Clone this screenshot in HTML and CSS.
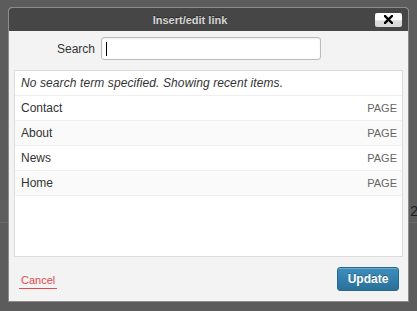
FILE: index.html
```html
<!DOCTYPE html>
<html>
<head>
<meta charset="utf-8">
<link rel="stylesheet" href="styles.css">
</head>
<body>
<div class="page-row"><span class="page-num">2</span></div>

<div class="dialog">
  <div class="titlebar">
    <div class="title">Insert/edit link</div>
    <button class="close" aria-label="Close">
      <svg width="9" height="9" viewBox="0 0 9 9"><path d="M1 1 L8 8 M8 1 L1 8" stroke="#000" stroke-width="2.4" stroke-linecap="square"/></svg>
    </button>
  </div>
  <div class="search-row">
    <label class="search-label">Search</label>
    <div class="search-input"><span class="caret"></span></div>
  </div>
  <div class="results">
    <div class="row notice">No search term specified. Showing recent items.</div>
    <div class="row"><span class="item">Contact</span><span class="type">PAGE</span></div>
    <div class="row alt"><span class="item">About</span><span class="type">PAGE</span></div>
    <div class="row"><span class="item">News</span><span class="type">PAGE</span></div>
    <div class="row alt"><span class="item">Home</span><span class="type">PAGE</span></div>
  </div>
  <div class="footer">
    <a class="cancel" href="#">Cancel</a>
    <button class="update">Update</button>
  </div>
</div>
</body>
</html>
```
FILE: styles.css
```css
html, body {
  margin: 0;
  padding: 0;
}
body {
  width: 417px;
  height: 311px;
  overflow: hidden;
  background: #5c5c5c;
  font-family: "Liberation Sans", Arial, sans-serif;
  position: relative;
}
.page-row {
  margin-top: 200px;
  height: 22px;
  background: #5e5e5e;
  border-bottom: 1px solid #6b6b6b;
  display: flex;
  justify-content: flex-end;
  align-items: center;
}
.page-num {
  font-size: 14px;
  color: #1e1e1e;
  margin-right: -1px;
}
.dialog {
  position: absolute;
  left: 8px;
  top: 7px;
  width: 401px;
  height: 295px;
  box-sizing: border-box;
  border: 1px solid #8c8c8c;
  border-radius: 4px 4px 0 0;
  background: #f3f3f3;
  display: flex;
  flex-direction: column;
  overflow: hidden;
}
.titlebar {
  height: 23px;
  background: #464646;
  display: flex;
  align-items: center;
  flex-shrink: 0;
}
.title {
  flex: 1;
  text-align: center;
  font-size: 11px;
  font-weight: bold;
  color: #d6d6d6;
  text-shadow: 0 -1px 0 #2a2a2a;
}
.close {
  width: 27px;
  height: 14px;
  margin: 0 6px 0 4px;
  padding: 0;
  border: none;
  border-radius: 2px;
  background: linear-gradient(#ffffff 0%, #ffffff 50%, #dcdcdc 55%, #d9d9d9 100%);
  display: flex;
  align-items: center;
  justify-content: center;
}
.search-row {
  display: flex;
  align-items: center;
  padding-top: 6px;
  height: 23px;
}
.search-label {
  width: 86px;
  text-align: right;
  margin-right: 6px;
  font-size: 12px;
  color: #333;
}
.search-input {
  width: 220px;
  height: 23px;
  box-sizing: border-box;
  background: #fff;
  border: 1px solid #bbb;
  border-radius: 3px;
  box-shadow: inset 0 1px 2px rgba(0,0,0,0.07);
  display: flex;
  align-items: center;
  padding-left: 4px;
}
.caret {
  width: 1px;
  height: 14px;
  background: #000;
}
.results {
  margin: 10px 5px 0 5px;
  height: 187px;
  box-sizing: border-box;
  border: 1px solid #dcdcdc;
  background: #fff;
  flex-shrink: 0;
}
.row {
  height: 24px;
  border-bottom: 1px solid #f0f0f0;
  display: flex;
  align-items: center;
  justify-content: space-between;
  padding: 0 5px 0 6px;
  font-size: 12px;
  color: #333;
}
.row.alt {
  background: #fafafa;
}
.notice {
  font-style: italic;
  letter-spacing: 0.1px;
}
.type {
  font-size: 11px;
  color: #666;
}
.footer {
  flex: 1;
  display: flex;
  align-items: center;
  justify-content: space-between;
  padding: 0 9px 0 10px;
}
.cancel {
  font-size: 11px;
  color: #e5484d;
  text-decoration: none;
  border-bottom: 1px solid #e5484d;
  padding: 0 2px 2px 2px;
  margin-top: 5px;
}
.update {
  width: 62px;
  height: 24px;
  box-sizing: border-box;
  border: 1px solid #236a91;
  border-radius: 3px;
  background: linear-gradient(#3d8fbe, #2b7099);
  box-shadow: inset 0 1px 0 rgba(255,255,255,0.25);
  color: #fff;
  font-family: "Liberation Sans", Arial, sans-serif;
  font-size: 12px;
  font-weight: bold;
  text-shadow: 0 -1px 0 rgba(0,0,0,0.3);
  padding: 0;
}
```
